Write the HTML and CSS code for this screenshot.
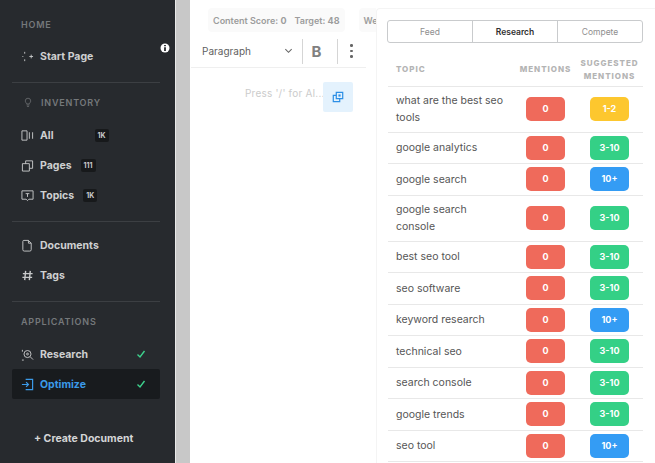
FILE: index.html
```html
<!DOCTYPE html>
<html lang="en">
<head>
<meta charset="utf-8">
<title>Optimize</title>
<link rel="stylesheet" href="styles.css">
</head>
<body>
<div class="app">
  <aside class="sidebar">
    <section class="group group-home">
      <div class="heading">HOME</div>
      <a class="item"><svg class="ico" viewBox="0 0 14 14"><path d="M9 7h4M11 5v4M4 2v2M4 10v2M1.500 7h1" /></svg><span>Start Page</span></a>
    </section>
    <section class="group">
      <div class="heading heading-icon"><svg class="ico ico-dim" viewBox="0 0 14 14"><path d="M5 10.500h4M5.500 12.500h3M5 9c0-1.500-1.800-2-1.800-4.200a3.800 3.800 0 0 1 7.600 0C10.800 7 9 7.500 9 9z"/></svg><span>INVENTORY</span></div>
      <a class="item"><svg class="ico" viewBox="0 0 14 14"><path d="M1 2h5.500v10H1zM9 3.500v7M12.500 3.500v7"/></svg><span>All</span><b class="count count-all">1K</b></a>
      <a class="item"><svg class="ico" viewBox="0 0 14 14"><path d="M1.500 5h7.500v8H1.500zM5 5V2h7.500v8H9"/></svg><span>Pages</span><b class="count">111</b></a>
      <a class="item"><svg class="ico" viewBox="0 0 14 14"><path d="M1 2h12v9H8.500L7 12.500 5.500 11H1zM5 5h4M7 5v3.500"/></svg><span>Topics</span><b class="count">1K</b></a>
    </section>
    <section class="group group-docs">
      <a class="item"><svg class="ico" viewBox="0 0 14 14"><path d="M3 1.500h5l3 3v7a1.500 1.500 0 0 1-1.500 1.500h-6A1.500 1.500 0 0 1 2 11.500V2.500a1 1 0 0 1 1-1zM8 1.500v3h3"/></svg><span>Documents</span></a>
      <a class="item"><svg class="ico ico-bold" viewBox="0 0 14 14"><path d="M5 2 4 12M10 2 9 12M2 5h10.500M1.500 9H12"/></svg><span>Tags</span></a>
    </section>
    <section class="group group-apps">
      <div class="heading">APPLICATIONS</div>
      <a class="item"><svg class="ico" viewBox="0 0 14 14"><circle cx="7" cy="6.500" r="3.800"/><circle cx="7" cy="6.500" r="1"/><path d="M10 9.500 13 12.500M1 13h2M1.500 2v2"/></svg><span>Research</span><svg class="check" viewBox="0 0 10 10"><path d="M1.500 5.500 4 8l4.500-6"/></svg></a>
      <a class="item item-active"><svg class="ico ico-blue" viewBox="0 0 14 14"><path d="M5 1.500h7.500v11H5M1 7h7M5.500 4.500 8 7 5.500 9.500"/></svg><span>Optimize</span><svg class="check" viewBox="0 0 10 10"><path d="M1.500 5.500 4 8l4.500-6"/></svg></a>
    </section>
    <div class="create">+ Create Document</div>
    <svg class="info" viewBox="0 0 10 10"><circle cx="5" cy="5" r="4.500" fill="#fff"/><path d="M5 2v1.300M5 4.300V8" stroke="#272a2e" stroke-width="1.800"/></svg>
  </aside>
  <div class="gutter"></div>
  <main class="editor">
    <div class="chips">
      <div class="chip chip-score"><span>Content Score: <b>0</b></span><span>Target: <b>48</b></span></div>
      <div class="chip chip-words">We</div>
    </div>
    <div class="toolbar">
      <div class="format"><span>Paragraph</span><svg class="chev" viewBox="0 0 10 6"><path d="M1.500 1 5 4.500 8.500 1"/></svg></div>
      <div class="bold">B</div>
      <div class="more"><i></i><i></i><i></i></div>
    </div>
    <div class="body-line">
      <span class="placeholder">Press '/' for AI...</span>
      <div class="copy"><svg viewBox="0 0 14 14"><path d="M5 1.500h7.500v7.500H5z"/><path d="M5 5H1.500v7.500H9V9"/><rect x="7.500" y="4" width="2.500" height="2.500" fill="#2c8fe6" stroke="none"/></svg></div>
    </div>
  </main>
  <div class="panel">
    <div class="tabs"><div class="tab">Feed</div><div class="tab tab-on">Research</div><div class="tab">Compete</div></div>
    <table class="topics">
      <thead><tr><th class="t-topic">TOPIC</th><th>MENTIONS</th><th>SUGGESTED MENTIONS</th></tr></thead>
      <tbody>
        <tr class="tall"><td class="t-topic">what are the best seo tools</td><td><span class="pill red">0</span></td><td><span class="pill yellow">1-2</span></td></tr>
        <tr><td class="t-topic">google analytics</td><td><span class="pill red">0</span></td><td><span class="pill green">3-10</span></td></tr>
        <tr><td class="t-topic">google search</td><td><span class="pill red">0</span></td><td><span class="pill blue">10+</span></td></tr>
        <tr class="tall"><td class="t-topic">google search console</td><td><span class="pill red">0</span></td><td><span class="pill green">3-10</span></td></tr>
        <tr><td class="t-topic">best seo tool</td><td><span class="pill red">0</span></td><td><span class="pill green">3-10</span></td></tr>
        <tr><td class="t-topic">seo software</td><td><span class="pill red">0</span></td><td><span class="pill green">3-10</span></td></tr>
        <tr><td class="t-topic">keyword research</td><td><span class="pill red">0</span></td><td><span class="pill blue">10+</span></td></tr>
        <tr><td class="t-topic">technical seo</td><td><span class="pill red">0</span></td><td><span class="pill green">3-10</span></td></tr>
        <tr><td class="t-topic">search console</td><td><span class="pill red">0</span></td><td><span class="pill green">3-10</span></td></tr>
        <tr><td class="t-topic">google trends</td><td><span class="pill red">0</span></td><td><span class="pill green">3-10</span></td></tr>
        <tr><td class="t-topic">seo tool</td><td><span class="pill red">0</span></td><td><span class="pill blue">10+</span></td></tr>
      </tbody>
    </table>
  </div>
</div>
</body>
</html>
```

FILE: styles.css
```css
* { box-sizing: border-box; }
html, body { margin: 0; height: 100%; overflow: hidden; background: #fff; }
body { font-family: Inter, "Liberation Sans", sans-serif; }
.app { display: flex; width: 655px; height: 463px; overflow: hidden; }

.sidebar { position: relative; flex: none; width: 175px; height: 463px; background: #272a2e; padding: 17px 15px 0 12px; color: #d4d5d6; }
.group { border-bottom: 1px solid #3c3f43; }
.group-home { height: 66px; }
.group:nth-of-type(2) { height: 139px; padding-top: 12px; }
.group-docs { height: 80px; padding-top: 8px; }
.group-apps { border: 0; padding-top: 12px; }
.heading { display: flex; align-items: center; height: 14px; padding-left: 9px; font-size: 9px; font-weight: 600; letter-spacing: .8px; color: #75787b; }
.heading-icon .ico { width: 10px; height: 11px; margin: 0 8px 0 2px; }
.group-home .heading { margin-bottom: 10px; }
.group:nth-of-type(2) .heading { margin-bottom: 11px; }
.group-apps .heading { margin-bottom: 11px; }
.item { display: flex; align-items: center; height: 30px; padding-left: 9px; font-size: 10.500px; font-weight: 700; color: #cfd0d1; }
.ico { flex: none; width: 13px; height: 13px; margin-right: 6px; fill: none; stroke: #c8c9ca; stroke-width: 1; }
.ico-dim { stroke: #75787b; }
.ico-bold { stroke-width: 1.500; }
.ico-blue { stroke: #3b9ae8; stroke-width: 1.300; }
.count { margin-left: 9px; padding: 2px 3px; border-radius: 2px; background: #17191b; color: #c9cacb; font-size: 7px; font-weight: 700; line-height: 9px; }
.count-all { margin-left: 41px; }
.check { width: 10px; height: 10px; margin-left: auto; margin-right: 14px; fill: none; stroke: #3dd28d; stroke-width: 1.400; }
.item-active { background: #181b1e; border-radius: 2px; color: #3b9ae8; }
.create { margin-top: 33px; padding-left: 22px; font-size: 10.500px; font-weight: 700; color: #d4d5d6; line-height: 14px; }
.info { position: absolute; left: 160px; top: 43px; width: 10px; height: 10px; }

.gutter { flex: none; width: 15px; background: #c8c8c8; border-left: 1px solid #e8e8e8; }

.editor { flex: none; width: 186px; overflow: hidden; color: #777; }
.chips { display: flex; gap: 14px; height: 31px; padding: 8px 0 0 18px; }
.chip { display: flex; gap: 7px; height: 24px; padding: 0 5px; border-radius: 4px; align-items: center; background: #fafafa; font-size: 9px; font-weight: 600; color: #9d9d9d; white-space: nowrap; }
.chip b { font-weight: 700; }
.chip-score { width: 138px; gap: 8px; }
.chip-words { flex: none; width: 30px; padding-left: 5px; }
.toolbar { display: flex; align-items: center; height: 37px; width: 175px; margin-left: 1px; padding: 4px 0 0 11px; border-bottom: 1px solid #efefef; }
.format { display: flex; align-items: center; width: 101px; height: 25px; font-size: 10px; color: #5f5f5f; border-right: 1px solid #d5d5d5; }
.chev { width: 9px; height: 6px; margin-left: auto; margin-right: 9px; fill: none; stroke: #666; stroke-width: 1.200; }
.bold { width: 35px; height: 25px; padding-right: 7px; line-height: 25px; text-align: center; font-size: 15px; font-weight: 700; color: #808080; border-right: 1px solid #d5d5d5; }
.more { display: flex; flex-direction: column; align-items: center; gap: 3px; width: 13px; margin-left: 7px; }
.more i { width: 2.500px; height: 2.500px; border-radius: 50%; background: #666; }
.body-line { display: flex; align-items: flex-start; padding: 14px 0 0 55px; }
.placeholder { padding-top: 5px; font-size: 10px; letter-spacing: .2px; color: #cbcbcb; white-space: nowrap; width: 78px; }
.copy { flex: none; display: flex; align-items: center; justify-content: center; width: 30px; height: 30px; background: #e4f2fd; border-radius: 2px; }
.copy svg { width: 12px; height: 12px; fill: none; stroke: #2c8fe6; stroke-width: 1.400; }

.panel { flex: none; width: 279px; margin-top: 8px; padding: 11px 12px 0 10px; background: #fff; border-left: 1px solid #f4f4f4; border-top: 1px solid #f4f4f4; border-top-left-radius: 4px; }
.tabs { display: flex; width: 256px; height: 23px; border: 1px solid #c9cbcd; border-radius: 3px; }
.tab { flex: 1; text-align: center; font-size: 8.500px; line-height: 22px; color: #8f8f8f; }
.tab + .tab { border-left: 1px solid #c9cbcd; }
.tab-on { color: #2f2f2f; font-weight: 600; }
.topics { width: 255px; border-collapse: collapse; table-layout: fixed; margin: 5px 0 0 1px; }
.topics th { height: 38px; padding: 6px 0 0; font-size: 8px; line-height: 13px; font-weight: 800; letter-spacing: .95px; color: #b4b4b4; text-align: center; }
.topics th:nth-child(2) { width: 61px; }
.topics th:nth-child(3) { width: 67px; }
.topics tr { border-bottom: 1px solid #e8e8e8; }
.topics td { height: 31.500px; padding: 0; text-align: center; }
.topics .tall td { height: 46px; }
.topics th.t-topic, .topics td.t-topic { padding-left: 8px; text-align: left; }
.topics td.t-topic { padding-right: 7px; font-size: 10.500px; line-height: 17px; color: #555; }
.pill { display: block; width: 39px; height: 24px; margin: 0 auto; border-radius: 5px; font-size: 9px; font-weight: 700; line-height: 24px; color: #fff; text-align: center; }
.red { background: #ef6a5b; }
.yellow { background: #fdc72e; }
.green { background: #34d086; }
.blue { background: #349cf4; }
```
